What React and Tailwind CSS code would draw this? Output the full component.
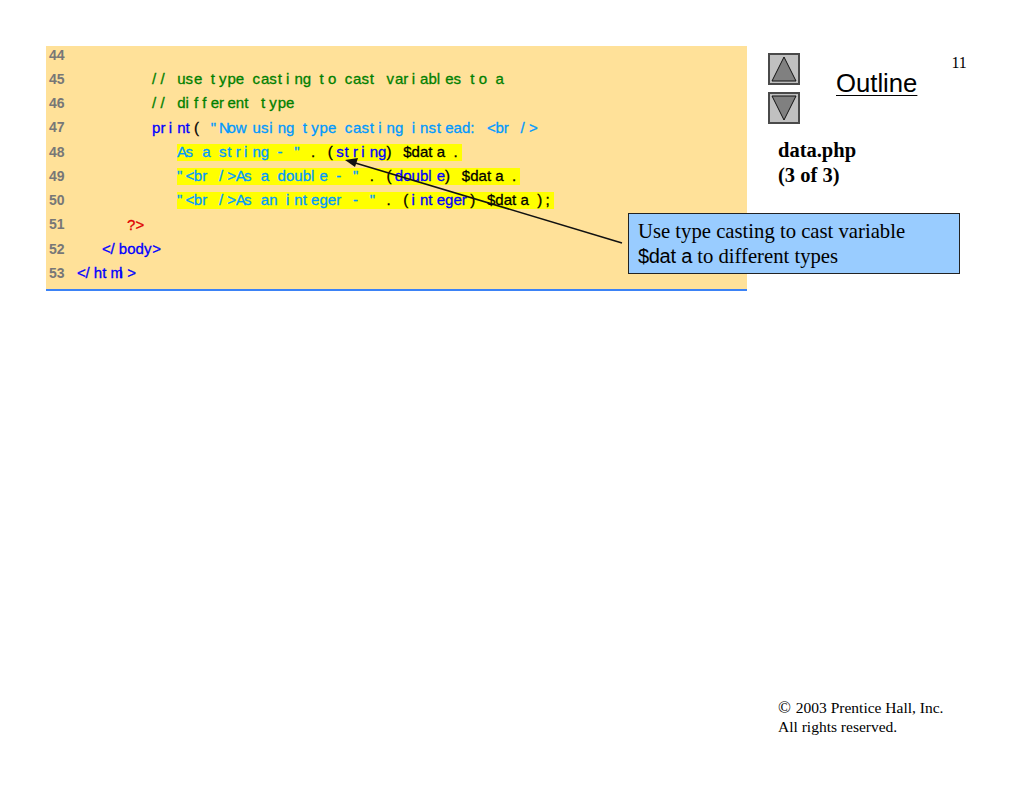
import React from "react";

const green = "text-[#008000]";
const blue = "text-[#0000ff]";
const sky = "text-[#0099ff]";
const red = "text-[#e00000]";
const black = "text-black";

const rows = [
  { num: 44, indent: "ml-0", parts: [] },
  { num: 45, indent: "ml-[75px]", parts: [["// use type casting to cast variables to a", green]] },
  { num: 46, indent: "ml-[75px]", parts: [["// different type", green]] },
  {
    num: 47,
    indent: "ml-[75px]",
    parts: [
      ["print", blue],
      ["( ", black],
      ['"Now using type casting instead: <br />', sky],
    ],
  },
  {
    num: 48,
    indent: "ml-[100px]",
    hl: true,
    parts: [
      ['As a string - "', sky],
      [" . (", black],
      ["string", blue],
      [") $data .", black],
    ],
  },
  {
    num: 49,
    indent: "ml-[100px]",
    hl: true,
    parts: [
      ['"<br />As a double - "', sky],
      [" . (", black],
      ["double", blue],
      [") $data .", black],
    ],
  },
  {
    num: 50,
    indent: "ml-[100px]",
    hl: true,
    parts: [
      ['"<br />As an integer - "', sky],
      [" . (", black],
      ["integer", blue],
      [") $data );", black],
    ],
  },
  { num: 51, indent: "ml-[50px]", parts: [["?>", red]] },
  { num: 52, indent: "ml-[25px]", parts: [["</body>", blue]] },
  { num: 53, indent: "ml-0", parts: [["</html>", blue]] },
];

// the slide keeps proportional glyphs on a fixed character grid
function Cells({ text, cell }) {
  return [...text].map((ch, i) => (
    <span key={i} className={`inline-block whitespace-pre ${cell}`}>
      {ch}
    </span>
  ));
}

function CodeRow({ row }) {
  return (
    <div className="flex h-[24.25px] items-center pb-[6px]">
      <span className="w-[31px] pl-[3px] text-[14px] font-bold text-[#777777]">{row.num}</span>
      <div className={`flex h-[17px] items-center whitespace-nowrap text-[15px] [-webkit-text-stroke:0.3px] ${row.indent} ${row.hl ? "bg-[#ffff00]" : ""}`}>
        {row.parts.map(([text, color], i) => (
          <span key={i} className={color}>
            <Cells text={text} cell="w-[8.38px]" />
          </span>
        ))}
      </div>
    </div>
  );
}

function ArrowButton({ down }) {
  return (
    <div className="h-[32px] w-[32px] border-2 border-[#4a4a4a] bg-[#c0c0c0]">
      <svg viewBox="0 0 28 28" className="h-[28px] w-[28px]">
        <polygon
          points={down ? "2,2 26,2 14,26" : "14,2 26,26 2,26"}
          fill="#808080"
          stroke="#111111"
          strokeWidth="1"
        />
      </svg>
    </div>
  );
}

export default function App() {
  return (
    <div className="relative flex h-[791px] w-[1024px] overflow-hidden bg-white pt-[46px] pl-[46px] font-['Liberation_Sans',sans-serif]">
      {/* Code panel */}
      <div className="h-[245px] w-[701px] border-b-2 border-[#3b82f6] bg-[#ffe199]">
        {rows.map((row) => (
          <CodeRow key={row.num} row={row} />
        ))}
      </div>

      {/* Right column */}
      <div className="flex flex-1 flex-col pl-[21px] pb-[55px]">
        <div className="flex">
          <div className="mt-[7px] flex flex-col gap-[7px]">
            <ArrowButton />
            <ArrowButton down />
          </div>
          <div className="mt-[19px] ml-[36px] h-[36px] text-[25.7px] leading-[36px] text-black underline decoration-1 underline-offset-[3px]">
            Outline
          </div>
          <div className="mt-[7px] ml-[34px] font-['Liberation_Serif',serif] text-[16px] leading-[20px] text-black">11</div>
        </div>
        <div className="mt-[14px] ml-[10px] font-['Liberation_Serif',serif] text-[20.5px] leading-[25px] font-bold text-black">
          <div>data.php</div>
          <div>(3 of 3)</div>
        </div>
        <div className="mt-auto ml-[10px] font-['Liberation_Serif',serif] text-[15.5px] leading-[19px] text-black">
          <div>
            <span className="mr-[1px] text-[17px]">©</span> 2003 Prentice Hall, Inc.
          </div>
          <div>All rights reserved.</div>
        </div>
      </div>

      {/* Callout arrow over the code */}
      <svg className="absolute top-0 left-0 h-[791px] w-[1024px]" viewBox="0 0 1024 791">
        <line x1="622" y1="243" x2="352" y2="162" stroke="#111111" strokeWidth="1.5" />
        <polygon points="345,160 358,158 355,167" fill="#111111" />
      </svg>

      {/* Callout */}
      <div className="absolute top-[213px] left-[628px] h-[61px] w-[332px] border border-[#222222] bg-[#99ccff] px-[9px] pt-[5px] font-['Liberation_Serif',serif] text-[20.7px] leading-[25px] text-black">
        <div>Use type casting to cast variable</div>
        <div>
          <span className="font-['Liberation_Sans',sans-serif] text-[20px]">
            <Cells text="$data" cell="w-[10.8px]" />
          </span>{" "}
          to different types
        </div>
      </div>
    </div>
  );
}
